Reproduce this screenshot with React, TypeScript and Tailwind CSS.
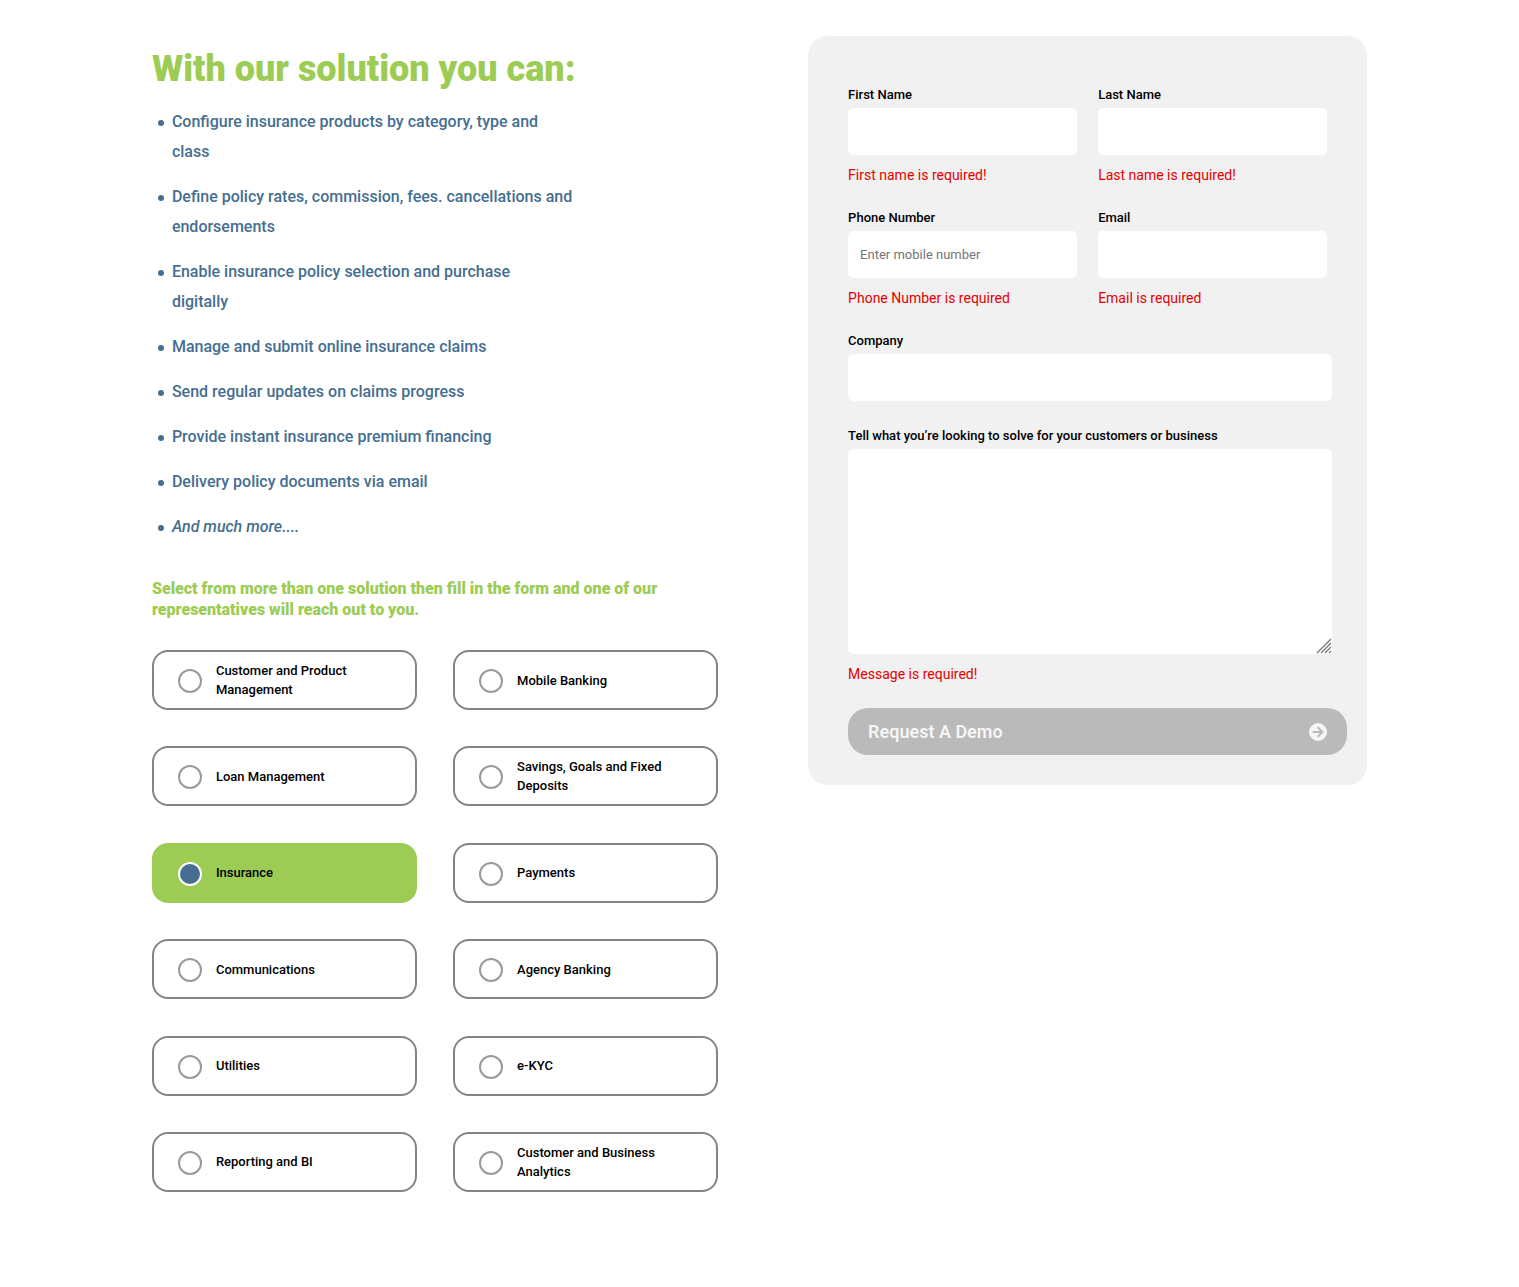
import { useState } from "react";
import type { ReactNode } from "react";

const features: ReactNode[] = [
  <>Configure insurance products by category, type and<br />class</>,
  <>Define policy rates, commission, fees. cancellations and<br />endorsements</>,
  <>Enable insurance policy selection and purchase<br />digitally</>,
  "Manage and submit online insurance claims",
  "Send regular updates on claims progress",
  "Provide instant insurance premium financing",
  "Delivery policy documents via email",
  <em>And much more....</em>,
];

const solutions = [
  "Customer and Product Management",
  "Mobile Banking",
  "Loan Management",
  "Savings, Goals and Fixed Deposits",
  "Insurance",
  "Payments",
  "Communications",
  "Agency Banking",
  "Utilities",
  "e-KYC",
  "Reporting and BI",
  "Customer and Business Analytics",
];

const labelClass = "mb-[3px] block text-[13px] leading-5 font-medium text-black";
const inputClass =
  "block h-[47px] w-full rounded-[5px] bg-white px-3 text-[13px] text-black outline-none placeholder:text-[#757575]";
const errorClass = "mt-2.5 text-sm leading-5 text-[#e60000]";

function Field({ id, label, type = "text", placeholder, error }: {
  id: string;
  label: string;
  type?: string;
  placeholder?: string;
  error?: string;
}) {
  return (
    <div>
      <label htmlFor={id} className={labelClass}>{label}</label>
      <input id={id} name={id} type={type} placeholder={placeholder} className={inputClass} />
      {error && <p className={errorClass}>{error}</p>}
    </div>
  );
}

function Solution({ name, checked, onSelect }: { name: string; checked: boolean; onSelect: () => void }) {
  return (
    <label
      className={
        "flex h-15 cursor-pointer items-center rounded-2xl border-2 pr-10 pl-6 " +
        (checked ? "border-[#9ccc54] bg-[#9ccc54]" : "border-[#848484] bg-white")
      }
    >
      <input
        type="radio"
        name="solution"
        value={name}
        checked={checked}
        onChange={onSelect}
        className="mt-0.5 size-6 shrink-0 appearance-none rounded-full border-2 border-[#9a9a9a] bg-white checked:border-white checked:bg-[#456e90]"
      />
      <span className="ml-3.5 text-[13px] leading-[19px] font-medium text-black">{name}</span>
    </label>
  );
}

export default function App() {
  const [selected, setSelected] = useState("Insurance");

  return (
    <main className="flex min-h-screen items-start justify-between bg-white px-[10%] py-9 font-[Roboto,sans-serif]">
      <section className="w-[46.6%]">
        <h1 className="mt-[9px] mb-3.5 text-4xl leading-12 font-black text-[#9ccc54]">With our solution you can:</h1>
        <ul className="space-y-[15px] text-base leading-[30px] font-medium text-[#456e90]">
          {features.map((f, i) => (
            <li key={i} className="flex items-start">
              <span className="mt-[13px] mr-2 ml-1.5 size-1.5 shrink-0 rounded-full bg-[#456e90]" />
              <span>{f}</span>
            </li>
          ))}
        </ul>
        <p className="mt-9 text-base leading-[21px] font-black text-[#9ccc54]">
          Select from more than one solution then fill in the form and one of our representatives will reach out to you.
        </p>
        <div className="mt-[30px] grid min-h-[542px] grid-cols-2 content-between gap-x-9">
          {solutions.map((s) => (
            <Solution key={s} name={s} checked={s === selected} onSelect={() => setSelected(s)} />
          ))}
        </div>
      </section>

      <form className="w-[46%] rounded-[20px] bg-[#f1f1f1] pt-[49px] pr-5 pb-[30px] pl-10" onSubmit={(e) => e.preventDefault()}>
        <div className="grid w-[96%] grid-cols-2 gap-x-[21px] gap-y-[23px]">
          <Field id="first-name" label="First Name" error="First name is required!" />
          <Field id="last-name" label="Last Name" error="Last name is required!" />
          <Field id="phone" label="Phone Number" type="tel" placeholder="Enter mobile number" error="Phone Number is required" />
          <Field id="email" label="Email" type="email" error="Email is required" />
        </div>
        <div className="mt-[23px] w-[97%]">
          <Field id="company" label="Company" />
          <div className="mt-[25px]">
            <label htmlFor="message" className={labelClass}>
              Tell what you’re looking to solve for your customers or business
            </label>
            <div className="relative">
              <textarea
                id="message"
                name="message"
                className="block h-[205px] w-full resize rounded-[5px] bg-white p-3 text-[13px] text-black outline-none"
              />
              <svg
                viewBox="0 0 16 16"
                className="pointer-events-none absolute right-0 bottom-0 size-4"
                aria-hidden="true"
              >
                <rect width="16" height="16" fill="#fff" />
                <path d="M1 15 15 1M5 15 15 5M9 15l6-6M13 15l2-2" stroke="#777" strokeWidth="1.3" />
              </svg>
            </div>
            <p className={errorClass}>Message is required!</p>
          </div>
        </div>
        <button
          type="submit"
          className="mt-6 flex h-[47px] w-full items-center justify-between rounded-[20px] bg-[#bababa] px-5 text-lg font-semibold text-[#f5f5f5]"
        >
          Request A Demo
          <svg viewBox="0 0 18 18" className="size-[18px]" aria-hidden="true">
            <circle cx="9" cy="9" r="9" fill="#f5f5f5" />
            <path d="M3.6 9h9.8M8.7 4.3 13.4 9l-4.7 4.7" fill="none" stroke="#bababa" strokeWidth="2" />
          </svg>
        </button>
      </form>
    </main>
  );
}
